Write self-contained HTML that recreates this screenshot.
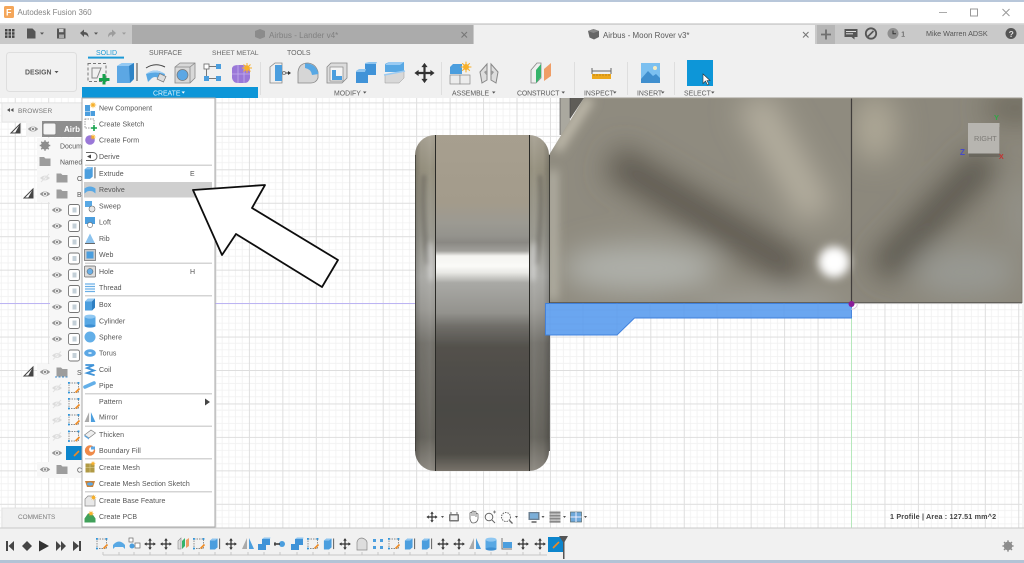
<!DOCTYPE html>
<html><head><meta charset="utf-8"><title>Autodesk Fusion 360</title>
<style>
html,body{margin:0;padding:0;background:#fff;width:1024px;height:563px;overflow:hidden}
svg{display:block;position:absolute;left:0;top:0}
text{font-family:"Liberation Sans",sans-serif;font-size:8px;fill:#666}
.m text{font-size:7px;fill:#555;letter-spacing:.08px}
.l{font-size:6.9px;fill:#5c5c5c;letter-spacing:0}
.t{font-size:6.9px;fill:#555}
</style></head><body>
<svg width="1024" height="563" viewBox="0 0 1024 563" xmlns="http://www.w3.org/2000/svg">
<defs>
<pattern id="g" width="33.45" height="33.45" patternUnits="userSpaceOnUse" patternTransform="translate(14.75 -31.4)">
<rect width="33.45" height="33.45" fill="#fff"/>
<path d="M6.69 0V33.45M13.38 0V33.45M20.07 0V33.45M26.76 0V33.45M0 6.69H33.45M0 13.38H33.45M0 20.07H33.45M0 26.76H33.45" stroke="#f1f1f1" stroke-width=".8"/>
<path d="M.5 0V33.45M0 .5H33.45" stroke="#dedede" stroke-width="1"/>
</pattern>
<filter id="b14" filterUnits="userSpaceOnUse" x="450" y="0" width="680" height="420"><feGaussianBlur stdDeviation="14"/></filter>
<filter id="b5" filterUnits="userSpaceOnUse" x="500" y="50" width="120" height="300"><feGaussianBlur stdDeviation="5"/></filter>
<filter id="b4" filterUnits="userSpaceOnUse" x="780" y="210" width="110" height="110"><feGaussianBlur stdDeviation="4.5"/></filter>
<filter id="b3" x="-80%" y="-30%" width="260%" height="160%"><feGaussianBlur stdDeviation="2.5"/></filter>
<filter id="soft" x="0" y="0" width="100%" height="100%"><feGaussianBlur stdDeviation=".32"/></filter>
<clipPath id="bl"><polygon points="549,155 584,98 851,98 851,303 549,303"/></clipPath>
<clipPath id="br"><rect x="851" y="98" width="171" height="205"/></clipPath>
<clipPath id="tc"><rect x="415" y="135" width="134" height="336" rx="20"/></clipPath>
<linearGradient id="tm" x1="0" y1="135" x2="0" y2="471" gradientUnits="userSpaceOnUse">
<stop offset="0" stop-color="#a79f8f"/><stop offset=".2" stop-color="#a39b8b"/><stop offset=".26" stop-color="#9c9a92"/><stop offset=".3" stop-color="#94938d"/><stop offset=".32" stop-color="#8a8883"/>
<stop offset=".345" stop-color="#a09f9a"/><stop offset=".36" stop-color="#f4f4f0"/><stop offset=".39" stop-color="#fbfbf8"/><stop offset=".41" stop-color="#e8e8e4"/><stop offset=".44" stop-color="#a9a9a5"/>
<stop offset=".53" stop-color="#93928d"/><stop offset=".57" stop-color="#6f6d68"/><stop offset=".63" stop-color="#53514c"/><stop offset=".82" stop-color="#4a4844"/><stop offset=".95" stop-color="#4f4d47"/><stop offset="1" stop-color="#77726a"/>
</linearGradient>
<linearGradient id="ts" x1="0" y1="135" x2="0" y2="471" gradientUnits="userSpaceOnUse">
<stop offset="0" stop-color="#a8a294"/><stop offset=".1" stop-color="#96917f"/><stop offset=".3" stop-color="#9a9990"/><stop offset=".42" stop-color="#aeaeaa"/><stop offset=".52" stop-color="#9c9b96"/><stop offset=".62" stop-color="#75736d"/><stop offset=".9" stop-color="#66645d"/><stop offset="1" stop-color="#8e8a82"/>
</linearGradient>
<linearGradient id="tl" x1="415" y1="0" x2="435" y2="0" gradientUnits="userSpaceOnUse"><stop offset="0" stop-color="#000" stop-opacity=".2"/><stop offset=".3" stop-color="#000" stop-opacity=".02"/><stop offset=".75" stop-color="#fff" stop-opacity=".04"/><stop offset="1" stop-color="#000" stop-opacity=".02"/></linearGradient>
<linearGradient id="tr" x1="549" y1="0" x2="529" y2="0" gradientUnits="userSpaceOnUse"><stop offset="0" stop-color="#000" stop-opacity=".18"/><stop offset=".3" stop-color="#000" stop-opacity=".02"/><stop offset=".75" stop-color="#fff" stop-opacity=".04"/><stop offset="1" stop-color="#000" stop-opacity=".02"/></linearGradient>

<g id="move" fill="#333"><path d="M0-6.5L2-3.8H.7V-.7H3.8V-2L6.5 0 3.8 2V.7H.7V3.8H2L0 6.5-2 3.8H-.7V.7H-3.8V2L-6.5 0-3.8-2V-.7H-.7V-3.8H-2Z"/></g>
<g id="bx"><path d="M-5-3L-2-6H5V3L2 6H-5Z" fill="#4c9ede"/><path d="M-5-3L-2-6H5L2-3Z" fill="#93c8f2"/><path d="M2-3L5-6V3L2 6Z" fill="#2d7fc2"/></g>
<g id="ex"><path d="M-6-4L-3-6.5H3V4L0 6.5H-6Z" fill="#4c9ede"/><path d="M-6-4L-3-6.5H3L0-4Z" fill="#8fc5ef"/><path d="M5.5-6.5V6" stroke="#444"/></g>
<g id="mir"><path d="M-6 5L-1-6V5Z" fill="#aaa"/><path d="M6 5L1-6V5Z" fill="#4c9ede"/></g>
<g id="cmb"><path d="M-6 0H-2V-5H6V1H2V6H-6Z" fill="#3f93d8"/><path d="M-2-5L0-6.5H6.5L6-5Z" fill="#8fc5ef"/></g>
<g id="cyl"><rect x="-5.5" y="-5" width="11" height="10.5" rx="1" fill="#59a8e4"/><ellipse cy="-4.4" rx="5.5" ry="2" fill="#90c8f2"/><ellipse cy="5" rx="5.5" ry="1.6" fill="#3d8fd2"/></g>
<g id="eye"><path d="M-5.2 0Q0-5 5.2 0 0 5-5.2 0Z" fill="#959595"/><circle r="2.2" fill="#efefef"/><circle r="1.2" fill="#8a8a8a"/></g>
<g id="eyeo" opacity=".35"><path d="M-5 0Q0-4.8 5 0 0 4.8-5 0Z" fill="#aaa"/><circle r="1.6" fill="#eee"/><path d="M-4 4L4-4" stroke="#bbb"/></g>
<g id="cp"><rect x="-5.5" y="-5.5" width="11" height="11" rx="2" fill="#fff" stroke="#777" stroke-width=".9"/><rect x="-1.5" y="-2.5" width="4" height="5" fill="#c4d0d8"/></g>
<g id="fd"><path d="M-5.5-4.5H-1L.5-3H5.5V4.5H-5.5Z" fill="#9d9d9d"/></g>
<g id="tr"><path d="M-3-5L3 0-3 5Z" fill="#fff" stroke="#555" stroke-width="1"/></g>
<g id="td"><path d="M4-5V4H-5Z" fill="#fff" stroke="#444" stroke-width="1"/><path d="M4-5V4H-1Z" fill="#444"/></g>
<g id="sks"><rect x="-5" y="-5" width="9.5" height="9.5" fill="none" stroke="#666" stroke-width=".7" stroke-dasharray="1.5 1"/><rect x="-6" y="-6" width="1.8" height="1.8" fill="#2f95dc"/><rect x="3.6" y="-6" width="1.8" height="1.8" fill="#2f95dc"/><rect x="-6" y="3.6" width="1.8" height="1.8" fill="#2f95dc"/><path d="M1.5 4.5L5.5 .5" stroke="#ef8a22" stroke-width="1.6"/></g>
<g id="spark"><circle r="2.2" fill="#f7b02b"/><path d="M0-4V4M-4 0H4M-2.8-2.8L2.8 2.8M-2.8 2.8L2.8-2.8" stroke="#f7b02b" stroke-width=".8"/></g>
<g id="gear"><circle r="3.6" fill="none" stroke="#8c8c8c" stroke-width="2.2"/><path d="M0-6.2V6.2M-6.2 0H6.2M-4.4-4.4L4.4 4.4M-4.4 4.4L4.4-4.4" stroke="#8c8c8c" stroke-width="1.7"/></g>
</defs>

<g filter="url(#soft)">
<!-- frame -->
<rect width="1024" height="563" fill="#fff"/>
<rect width="1024" height="2" fill="#b8c7da"/>
<!-- title -->
<rect x="4" y="6" width="10" height="12" rx="1.5" fill="#f4a65a"/><text x="6" y="15.5" style="font-size:9px;font-weight:bold;fill:#fff">F</text>
<text x="17.5" y="15" style="font-size:7.9px;fill:#858585">Autodesk Fusion 360</text>
<path d="M939 12.5H947" stroke="#aaa"/><rect x="970.5" y="9" width="7" height="7" fill="none" stroke="#999"/><path d="M1002.5 9L1009.5 16M1009.5 9L1002.5 16" stroke="#999"/>

<!-- tab bar -->
<rect y="23" width="1024" height="21" fill="#c9c9c9"/>
<rect y="23" width="1024" height="1.5" fill="#dcdcdc"/>
<rect x="132" y="25" width="341" height="19" fill="#ababab"/>
<rect x="474" y="25" width="341" height="19" fill="#f0f0f0"/>
<rect x="817" y="25" width="18" height="19" fill="#b6b6b6"/>
<path d="M826 29.5V39.5M821 34.5H831" stroke="#6f6f6f" stroke-width="1.8"/>
<!-- left qat -->
<g fill="#444"><rect x="5" y="29" width="2.5" height="2.5"/><rect x="8.5" y="29" width="2.5" height="2.5"/><rect x="12" y="29" width="2.5" height="2.5"/><rect x="5" y="32.2" width="2.5" height="2.5"/><rect x="8.5" y="32.2" width="2.5" height="2.5"/><rect x="12" y="32.2" width="2.5" height="2.5"/><rect x="5" y="35.4" width="2.5" height="2.5"/><rect x="8.5" y="35.4" width="2.5" height="2.5"/><rect x="12" y="35.4" width="2.5" height="2.5"/></g>
<path d="M27 28.5H32.5L35.5 31.5V38.5H27Z" fill="#555"/><path d="M40 32.5H44L42 34.8Z" fill="#555"/>
<path d="M57 28.5H65.5V38.5H57Z" fill="#555"/><rect x="59" y="29" width="4.5" height="3.2" fill="#ccc"/><rect x="59" y="34.5" width="5" height="3.5" fill="#aaa"/>
<path d="M80 33L84 29.5V32C87.5 32 88.5 34 88.5 37.5 87.5 35.5 86 34.5 84 34.7V37Z" fill="#555"/><path d="M94 32.5H98L96 34.8Z" fill="#555"/>
<path d="M116 33L112 29.5V32C109 32 108 34 108 37.5 109 35.5 110.5 34.5 112 34.7V37Z" fill="#9c9c9c"/><path d="M122 32.5H126L124 34.8Z" fill="#9c9c9c"/>
<!-- tabs content -->
<path d="M255 31L260 29 265 31V37L260 39 255 37Z" fill="#8b8b8b"/>
<text x="269" y="38" style="font-size:8.1px;fill:#808080">Airbus - Lander v4*</text>
<path d="M461.5 32L467 37.5M467 32L461.5 37.5" stroke="#777" stroke-width="1.1"/>
<path d="M588 31L593.5 29 599 31V37L594 39.5 589.5 37.5Z" fill="#666"/><path d="M588 31L593.5 33 599 31 593.5 29Z" fill="#888"/>
<text x="603" y="38" style="font-size:7.95px;fill:#5a5a5a">Airbus - Moon Rover v3*</text>
<path d="M803 32L808.5 37.5M808.5 32L803 37.5" stroke="#777" stroke-width="1.1"/>
<!-- right top -->
<path d="M844.5 29H857.5V37H854.5V39.5L851.5 37H844.5Z" fill="#555"/><rect x="846" y="31" width="10" height="1" fill="#ddd"/><rect x="846" y="33.3" width="7" height="1" fill="#ddd"/>
<circle cx="871" cy="33.5" r="5.2" fill="none" stroke="#555" stroke-width="1.8"/><path d="M868 36.5L873.5 31" stroke="#555" stroke-width="1.6"/>
<circle cx="893" cy="33.5" r="5.5" fill="#8f8f8f"/><path d="M893 30.5V33.8H896" stroke="#333" fill="none" stroke-width="1"/>
<text x="901" y="36.5" style="font-size:7.5px;fill:#444">1</text>
<text x="926" y="36" style="font-size:7.2px;fill:#555">Mike Warren ADSK</text>
<circle cx="1011" cy="33.5" r="5.5" fill="#555"/><text x="1008.6" y="36.8" style="font-size:8.5px;font-weight:bold;fill:#ddd">?</text>

<!-- toolbar -->
<rect y="44" width="1024" height="54" fill="#f0f0f0"/>
<rect x="6.5" y="52.5" width="70" height="39" rx="3" fill="#f1f1f1" stroke="#dedede"/>
<text x="25" y="74.5" style="font-size:6.9px;font-weight:bold;fill:#5a5a5a">DESIGN</text><path d="M54.5 71H58.5L56.5 73.3Z" fill="#555"/>
<text x="96" y="55" style="font-size:7px;fill:#1e9ad6">SOLID</text><rect x="88" y="56.6" width="36" height="2" fill="#1e9ad6"/>
<text x="149" y="55" style="font-size:7px;fill:#666">SURFACE</text>
<text x="212" y="55" style="font-size:6.8px;fill:#666">SHEET METAL</text>
<text x="287" y="55" style="font-size:7px;fill:#666">TOOLS</text>
<rect x="82" y="87" width="176" height="11.5" fill="#0b96d8"/>
<text x="153" y="95.5" class="l" style="fill:#dff1fb">CREATE</text><path d="M181.5 91.5H185L183.3 93.6Z" fill="#fff"/>
<g stroke="#dedede"><path d="M260.5 62V95M441.5 62V95M574.5 62V95M627.5 62V95M674.5 62V95"/></g>
<text x="334" y="95.5" class="l">MODIFY</text><path d="M363 91.5H366.500L364.700 93.6Z" fill="#555"/>
<text x="452" y="95.5" class="l">ASSEMBLE</text><path d="M492 91.5H495.500L493.700 93.6Z" fill="#555"/>
<text x="517" y="95.5" class="l" style="letter-spacing:-.1px">CONSTRUCT</text><path d="M561.500 91.5H565L563.200 93.6Z" fill="#555"/>
<text x="584" y="95.5" class="l">INSPECT</text><path d="M613 91.5H616.5L614.8 93.6Z" fill="#555"/>
<text x="637" y="95.5" class="l">INSERT</text><path d="M661 91.5H664.5L662.8 93.6Z" fill="#555"/>
<text x="684" y="95.5" class="l">SELECT</text><path d="M711 91.5H714.5L712.8 93.6Z" fill="#555"/>

<!-- toolbar icons -->
<g>
<rect x="88" y="63.500" width="18" height="18" fill="none" stroke="#777" stroke-dasharray="3 2"/>
<path d="M92 68H101L97 78H92Z" fill="none" stroke="#888"/>
<path d="M104 74V84.500M99 79.500H109.500" stroke="#12a14b" stroke-width="3"/>
<path d="M117 66L122 63H134V79L130 83H117Z" fill="#5ba7e4"/><path d="M117 66L122 63H134L129 66Z" fill="#93c9f3"/><path d="M129 66L134 63V79L130 83Z" fill="#2f83c6"/>
<path d="M137 63V81" stroke="#444"/>
<path d="M146 68Q155 62 165 67" stroke="#444" fill="none"/>
<path d="M146 74Q155 67 165 74L163 81 158 78Q155 76 152 78L148 82Z" fill="#59a8e4"/><path d="M146 74Q155 67 165 74 155 71 146 74Z" fill="#a6d2f5"/><rect x="158" y="75" width="7" height="6" fill="#ddd" stroke="#777" stroke-width=".7" transform="rotate(25 162 78)"/>
<path d="M175 67L180 63H195V78L190 83H175Z" fill="#d8d8d8" stroke="#888" stroke-width=".8"/><path d="M175 67H190V83M190 67L195 63" fill="none" stroke="#888" stroke-width=".8"/><circle cx="182.500" cy="75" r="5.5" fill="#5ba7e4" stroke="#777" stroke-width=".7"/>
<rect x="204" y="64" width="5" height="5" fill="#fff" stroke="#666" stroke-width=".8"/><rect x="216" y="64" width="5" height="5" fill="#4c9ede"/><rect x="204" y="76" width="5" height="5" fill="#4c9ede"/><rect x="216" y="76" width="5" height="5" fill="#4c9ede"/><path d="M209 66.500H216M206.500 69V76M209 78.500H216" stroke="#777" fill="none"/>
<path d="M232 68Q233 65 238 65H244Q249 65 250 70V78Q249 83 244 83H238Q233 83 232 78Z" fill="#9a78d8"/><path d="M238 65V83M244 65V83M232 74H250" stroke="#c3aeec" stroke-width=".8"/><use href="#spark" transform="translate(247 68) scale(1.25)"/>

<path d="M270 67L275 63H282V83H270Z" fill="#efefef" stroke="#888" stroke-width=".8"/><path d="M275 65H282V81H275Z" fill="#4c9ede"/><path d="M283 73H290" stroke="#333"/><path d="M288 71L291 73 288 75Z" fill="#333"/><circle cx="284" cy="73" r="1.6" fill="#ddd" stroke="#555" stroke-width=".6"/>
<path d="M298 83V72Q299 63 308 63 316 64 318 72V78Q316 83 311 83Z" fill="#d6d6d6" stroke="#888" stroke-width=".8"/><path d="M305 63.500Q316 63 318.500 74L312 75Q311 69 305 68Z" fill="#59a8e4"/>
<path d="M327 67L331 63H347V78L342 83H327Z" fill="#dcdcdc" stroke="#888" stroke-width=".8"/><rect x="330" y="67" width="13" height="14" fill="#f4f4f4" stroke="#888" stroke-width=".7"/><path d="M332 70H336V76H342V80H332Z" fill="#4c9ede"/>
<path d="M356 71H365V63H376V75H368V83H356Z" fill="#3f93d8"/><path d="M365 63L369 62H377L376 64H365ZM356 71L359 69H366L365 72H356Z" fill="#8fc5ef"/>
<path d="M385 64L389 62H404V72H385Z" fill="#59a8e4"/><path d="M385 65H400L404 62H389Z" fill="#9acbf3"/><path d="M385 75L404 71V78L399 83H385Z" fill="#d8d8d8" stroke="#999" stroke-width=".5"/><path d="M384 75L405 71" stroke="#9acbf3" stroke-width="1.6"/>
<use href="#move" transform="translate(424.500 73) scale(1.55)"/>

<path d="M450 67L453 64H462V74H450Z" fill="#4c9ede"/><rect x="450" y="75" width="10" height="9" fill="#ececec" stroke="#888" stroke-width=".7"/><rect x="460" y="75" width="10" height="9" fill="#ececec" stroke="#888" stroke-width=".7"/><use href="#spark" transform="translate(466 67) scale(1.35)"/>
<path d="M480 72L487 64V80L482 83Z" fill="#ddd" stroke="#888"/><path d="M498 72L491 64V80L496 83Z" fill="#ddd" stroke="#888"/><path d="M484 72L487 70V76ZM494 72L491 70V76Z" fill="#999"/>

<path d="M531 70L537 63H541V78L536 83H531Z" fill="#efefef" stroke="#888" stroke-width=".8"/><path d="M536 70L541 64V77L536 83Z" fill="#35b36a"/><path d="M544 69L551 63V76L544 81Z" fill="#ef9d66"/>
<rect x="592" y="74" width="19" height="5" fill="#eda81f"/><path d="M592 71H611M592 68V74M611 68V74" stroke="#666" fill="none"/><path d="M594 74V76M597 74V76M600 74V76M603 74V76M606 74V76M609 74V76" stroke="#a06c10" stroke-width=".6"/>
<rect x="641" y="63" width="19" height="20" fill="#7cc0f0"/><circle cx="655" cy="68" r="2" fill="#f7ecc0"/><path d="M641 79L648 71 653 76 656 74 660 78V83H641Z" fill="#3f8fce"/>
<rect x="687" y="60" width="26" height="26" fill="#0b96d8"/><path d="M703 74V83.500L705.500 81 707.500 85 709 84.300 707 80.500H710Z" fill="#fff" stroke="#333" stroke-width=".6"/>
</g>

<!-- canvas -->
<rect y="98" width="1024" height="430" fill="url(#g)"/>
<path d="M0 303.500H416" stroke="#bcb4f3"/>
<path d="M851.500 318V528" stroke="#b6e8bc"/>
<rect x="1022" y="98" width="2" height="430" fill="#f4f4f4"/>

<!-- block behind -->
<rect x="560" y="98" width="10" height="37" fill="#aaa89f"/><polygon points="570,98 584,98 570,119" fill="#5f5d58"/>
<path d="M560 98V135M570 98V118" stroke="#444" stroke-width=".6"/>

<!-- body left panel -->
<g clip-path="url(#bl)">
<rect x="540" y="90" width="320" height="220" fill="#8f8b7f"/>
<g filter="url(#b14)">
<path d="M612 160L800 272" stroke="#5d594f" stroke-width="34" fill="none"/>
<path d="M752 100L818 215" stroke="#b4ae9f" stroke-width="36" fill="none"/>
<ellipse cx="640" cy="268" rx="78" ry="24" fill="#afb0aa"/>
<ellipse cx="770" cy="306" rx="75" ry="10" fill="#a9a8a2"/>
</g>
<g filter="url(#b5)">
<path d="M553 170V300" stroke="#bab7aa" stroke-width="8" fill="none"/>
<path d="M556 150L590 98" stroke="#c2bdae" stroke-width="10" fill="none"/>
</g>
</g>
<!-- body right panel -->
<g clip-path="url(#br)">
<rect x="845" y="90" width="185" height="220" fill="#8c887c"/>
<g filter="url(#b14)">
<ellipse cx="875" cy="128" rx="22" ry="34" fill="#ada796"/>
<path d="M988 158L880 272" stroke="#5a564e" stroke-width="30" fill="none"/>
<ellipse cx="1015" cy="108" rx="32" ry="14" fill="#6a665a"/>
<ellipse cx="965" cy="272" rx="52" ry="24" fill="#989993"/>
<ellipse cx="1022" cy="215" rx="10" ry="36" fill="#979790"/>
</g>
</g>
<g filter="url(#b4)">
<circle cx="834" cy="262" r="15.500" fill="#fff"/>
</g>
<path d="M851.500 98V303" stroke="#403e3a" stroke-width="1.2"/>
<path d="M549 302.700H1022" stroke="#5c5a55" stroke-width="1.2"/>
<path d="M549.500 155V303" stroke="#3e3c38"/>
<path d="M1022 98V303" stroke="#77746a" stroke-width=".8"/>
<path d="M584 98H1022" stroke="#a09c92" stroke-width="1"/>

<!-- tire -->
<g clip-path="url(#tc)">
<rect x="415" y="135" width="134" height="336" fill="url(#ts)"/>
<rect x="435" y="135" width="94" height="336" fill="url(#tm)"/>
<rect x="415" y="135" width="20" height="336" fill="url(#tl)"/>
<rect x="529" y="135" width="20" height="336" fill="url(#tr)"/>
<g filter="url(#b3)">
<path d="M424 175Q421 215 428 265" stroke="#55524c" stroke-width="4" fill="none" opacity=".55"/>
<path d="M540 175Q543 215 536 265" stroke="#55524c" stroke-width="4" fill="none" opacity=".55"/>
<ellipse cx="431" cy="262" rx="3" ry="20" fill="#eee" opacity=".5"/><ellipse cx="533" cy="262" rx="3" ry="20" fill="#eee" opacity=".5"/>
</g>
</g>
<path d="M435.500 135V471M529.500 135V471" stroke="#2b2a28" stroke-width="1"/>
<path d="M415.500 155V451M549.500 155V451" stroke="#3f3d38" stroke-width=".8"/>

<!-- sketch profile -->
<polygon points="545.500,303.500 851.500,303.500 851.500,318 634.500,318 617,335 545.500,335" fill="#6ba6f0" stroke="#4181dc" stroke-width=".9"/>
<path d="M550 303V335M583 303V335M617 303V335M650 303V318M684 303V318M717 303V318M751 303V318M784 303V318M818 303V318M546 310H851M546 317H851M546 324H622M546 330H617" stroke="#5d99e4" stroke-width=".4" opacity=".6" fill="none"/>
<circle cx="851.500" cy="304" r="3" fill="#8a1f98"/><path d="M851 309A5 5 0 0 0 857 303" stroke="#d8c4da" fill="none"/>

<!-- viewcube -->
<rect x="969" y="127" width="31" height="30" fill="#5f5b53" opacity=".55"/>
<rect x="968" y="123" width="31.500" height="30.500" fill="#b7b5b0"/>
<text x="974" y="141" style="font-size:7.300px;fill:#7c7a76">RIGHT</text>
<text x="994" y="120" style="font-size:7.500px;font-weight:bold;fill:#2fa844">Y</text>
<text x="960" y="155" style="font-size:8px;font-weight:bold;fill:#4448c8">Z</text>
<text x="999" y="159" style="font-size:7px;font-weight:bold;fill:#c42f2f">X</text>

<!-- browser -->
<rect x="2" y="103" width="80" height="19" fill="#f3f3f3" stroke="#e2e2e2" stroke-width=".7"/>
<path d="M7 110L10 108V112ZM10.500 110L13.500 108V112Z" fill="#555"/>
<text x="18" y="113" class="t" style="font-size:6.5px;fill:#777;letter-spacing:.1px">BROWSER</text>
<g>
<rect x="26" y="121" width="56" height="16" fill="#f1f1f1"/>
<rect x="42" y="121" width="40" height="16" fill="#8e8e8e"/>
<rect x="43" y="123" width="13" height="12" rx="2" fill="#f5f5f5" stroke="#888"/>
<use href="#td" transform="translate(16 129)"/><use href="#eye" transform="translate(33 129)"/>
<text x="64" y="132" style="font-size:8px;font-weight:bold;fill:#fff">Airb</text>
<rect x="37" y="138" width="45" height="16" fill="#f7f7f7"/><use href="#tr" transform="translate(28 145.500)"/><use href="#gear" transform="translate(45 145.500) scale(.85)"/><text x="60" y="148.500" class="t">Docum</text>
<rect x="37" y="154" width="45" height="16" fill="#f7f7f7"/><use href="#tr" transform="translate(28 161.500)"/><use href="#fd" transform="translate(45 161.500)"/><text x="60" y="164.500" class="t">Named</text>
<rect x="37" y="170" width="45" height="16" fill="#f7f7f7"/><use href="#tr" transform="translate(28 178)"/><use href="#eyeo" transform="translate(45 178)"/><use href="#fd" transform="translate(62 178)"/><text x="77" y="181" class="t">O</text>
<rect x="37" y="186" width="45" height="16" fill="#f7f7f7"/><use href="#td" transform="translate(29 194)"/><use href="#eye" transform="translate(45 194)"/><use href="#fd" transform="translate(62 194)"/><text x="77" y="197" class="t">B</text>

<rect x="50" y="202" width="32" height="162" fill="#f7f7f7"/>
<use href="#eye" transform="translate(57 210)"/><use href="#cp" transform="translate(74 210)"/>
<use href="#eye" transform="translate(57 226)"/><use href="#cp" transform="translate(74 226)"/>
<use href="#eye" transform="translate(57 242)"/><use href="#cp" transform="translate(74 242)"/>
<use href="#eye" transform="translate(57 258.500)"/><use href="#cp" transform="translate(74 258.500)"/>
<use href="#eye" transform="translate(57 275)"/><use href="#cp" transform="translate(74 275)"/>
<use href="#eye" transform="translate(57 291)"/><use href="#cp" transform="translate(74 291)"/>
<use href="#eye" transform="translate(57 307)"/><use href="#cp" transform="translate(74 307)"/>
<use href="#eye" transform="translate(57 323)"/><use href="#cp" transform="translate(74 323)"/>
<use href="#eye" transform="translate(57 339)"/><use href="#cp" transform="translate(74 339)"/>
<use href="#eyeo" transform="translate(57 355.500)"/><use href="#cp" transform="translate(74 355.500)"/>

<rect x="37" y="364" width="45" height="16" fill="#f7f7f7"/><use href="#td" transform="translate(29 372)"/><use href="#eye" transform="translate(45 372)"/><use href="#fd" transform="translate(62 372)"/><path d="M55 377H68" stroke="#3f8fd0" stroke-dasharray="2 1.5"/><text x="77" y="375" class="t">S</text>
<rect x="50" y="380" width="32" height="82" fill="#f7f7f7"/>
<use href="#eyeo" transform="translate(57 388)"/><use href="#sks" transform="translate(74 388)"/>
<use href="#eyeo" transform="translate(57 404)"/><use href="#sks" transform="translate(74 404)"/>
<use href="#eyeo" transform="translate(57 420)"/><use href="#sks" transform="translate(74 420)"/>
<use href="#eyeo" transform="translate(57 436.500)"/><use href="#sks" transform="translate(74 436.500)"/>
<use href="#eye" transform="translate(57 453)"/><rect x="66" y="446" width="16" height="14" fill="#0b85cc"/><path d="M74 456L79 451" stroke="#ef8a22" stroke-width="1.6"/>
<rect x="37" y="462" width="45" height="16" fill="#f7f7f7"/><use href="#tr" transform="translate(28 469.500)"/><use href="#eye" transform="translate(45 469.500)"/><use href="#fd" transform="translate(62 469.500)"/><text x="77" y="472.500" class="t">C</text>
</g>
<rect x="2" y="508" width="80" height="20" fill="#f0f0f0" stroke="#dedede" stroke-width=".7"/>
<text x="18" y="519" class="t" style="font-size:6.4px;fill:#7a7a7a">COMMENTS</text>

<!-- menu -->
<rect x="82" y="98" width="133" height="429" fill="#fff" stroke="#a8a8a8" stroke-width="1"/>
<rect x="84" y="182" width="128" height="15.500" fill="#cfcfcf"/>
<g fill="#d4d4d4">
<rect x="85" y="164.500" width="127" height="1.500"/><rect x="85" y="262.500" width="127" height="1.500"/><rect x="85" y="295" width="127" height="1.500"/><rect x="85" y="393" width="127" height="1.500"/><rect x="85" y="425.500" width="127" height="1.500"/><rect x="85" y="458" width="127" height="1.500"/><rect x="85" y="491" width="127" height="1.500"/>
</g>
<g class="m">
<text x="99" y="110.500">New Component</text>
<text x="99" y="126.500">Create Sketch</text>
<text x="99" y="142.500">Create Form</text>
<text x="99" y="159">Derive</text>
<text x="99" y="176">Extrude</text><text x="190" y="176">E</text>
<text x="99" y="192">Revolve</text>
<text x="99" y="208.500">Sweep</text>
<text x="99" y="224.500">Loft</text>
<text x="99" y="241">Rib</text>
<text x="99" y="257">Web</text>
<text x="99" y="274">Hole</text><text x="190" y="274">H</text>
<text x="99" y="290">Thread</text>
<text x="99" y="307">Box</text>
<text x="99" y="323.500">Cylinder</text>
<text x="99" y="339.500">Sphere</text>
<text x="99" y="355.500">Torus</text>
<text x="99" y="372">Coil</text>
<text x="99" y="388">Pipe</text>
<text x="99" y="404">Pattern</text>
<text x="99" y="419.500">Mirror</text>
<text x="99" y="437">Thicken</text>
<text x="99" y="453">Boundary Fill</text>
<text x="99" y="470">Create Mesh</text>
<text x="99" y="486">Create Mesh Section Sketch</text>
<text x="99" y="503">Create Base Feature</text>
<text x="99" y="519">Create PCB</text>
</g>
<path d="M205 398.500L210 402 205 405.500Z" fill="#444"/>
<!-- menu icons -->
<path d="M85 105H90V111H85ZM90.500 111H95V116H90.500ZM85 111.500H90V116H85Z" fill="#4c9ede"/><use href="#spark" transform="translate(93 105) scale(.8)"/>
<g transform="translate(90 124)"><rect x="-5" y="-5" width="9" height="9" fill="none" stroke="#777" stroke-width=".7" stroke-dasharray="1.500 1"/><path d="M4 1V7M1 4H7" stroke="#12a14b" stroke-width="1.600"/></g>
<g transform="translate(90 140)"><circle r="4.800" fill="#9a78d8"/><use href="#spark" transform="translate(3 -3) scale(.7)"/></g>
<g transform="translate(90 156.500)"><path d="M-4-4H3A4 4 0 0 1 3 4H-4" fill="none" stroke="#666"/><path d="M-3 0L1-2V2Z" fill="#444"/></g>
<use href="#ex" transform="translate(90 173) scale(.9)"/>
<g transform="translate(90 189.500)"><path d="M-5.500-1Q0-5 5.500-1V4L3 2Q0 1-3 2L-5.500 4Z" fill="#59a8e4"/></g>
<g transform="translate(90 206)"><path d="M-5-5H2V1H-5Z" fill="#59a8e4"/><circle cx="2" cy="3" r="3" fill="#e6e6e6" stroke="#666" stroke-width=".6"/></g>
<g transform="translate(90 222)"><path d="M-5-5H5V2H-5Z" fill="#4c9ede"/><circle cy="3" r="2.600" fill="#fff" stroke="#666" stroke-width=".6"/></g>
<g transform="translate(90 238.500)"><path d="M-5 5L0-5 5 5Z" fill="#8cc3ee"/><path d="M-5 5H5" stroke="#666"/></g>
<g transform="translate(90 255)"><rect x="-5.500" y="-5.500" width="11" height="11" fill="#ccc" stroke="#666" stroke-width=".7"/><rect x="-3.500" y="-3.500" width="7" height="7" fill="#4c9ede"/></g>
<g transform="translate(90 271.500)"><rect x="-5.500" y="-5.500" width="11" height="11" rx="1" fill="#ddd" stroke="#666" stroke-width=".7"/><circle r="3" fill="#6aafe6" stroke="#555" stroke-width=".5"/></g>
<g transform="translate(90 288)" stroke="#6aafe6" stroke-width="1.200"><path d="M-5-4H5M-5-1.500H5M-5 1H5M-5 3.500H5"/></g>
<use href="#bx" transform="translate(90 304.500)"/>
<use href="#cyl" transform="translate(90 321)"/>
<circle cx="90" cy="337" r="5.500" fill="#64afe8"/>
<g transform="translate(90 353)"><ellipse rx="5.800" ry="3.800" fill="#5ba7e4"/><ellipse rx="1.800" ry="1" fill="#d4ecfc"/></g>
<path d="M86 365H94L87 368 94 370.500 87 373 94 375" fill="none" stroke="#3f93d8" stroke-width="1.800" stroke-linecap="round"/>
<path d="M85 387L94 383" stroke="#64afe8" stroke-width="3.600" stroke-linecap="round"/>
<use href="#mir" transform="translate(90 417.500) scale(.9)"/>
<g transform="translate(90 434)"><path d="M-5.500 1L1-4 5.500-1-1 4Z" fill="#eee" stroke="#777" stroke-width=".6"/><path d="M-5.500 1L-1 4V5.500L-5.500 2.500Z" fill="#5ba7e4"/></g>
<g transform="translate(90 450.500)"><circle r="5.200" fill="#ef8a4a"/><circle cx="1.500" cy="-1" r="2.400" fill="#fff"/><rect x="1" y="-4" width="4" height="3" fill="#5ba7e4"/></g>
<g transform="translate(90 467.500)"><path d="M-4.500-4H4.500V5H-4.500Z" fill="#b09a45"/><path d="M-4.500 0H4.500M0-4V5" stroke="#dfd49c" stroke-width=".5"/><use href="#spark" transform="translate(3 -4) scale(.6)"/></g>
<g transform="translate(90 484)"><path d="M-5-3H5L3 3H-3Z" fill="#c8843d"/><ellipse rx="3" ry="1.600" fill="#5ba7e4"/></g>
<g transform="translate(90 501)"><path d="M-5 5V-2L-2-5H4L5-2V5Z" fill="#e8e8e8" stroke="#888" stroke-width=".7"/><use href="#spark" transform="translate(3.500 -3.500) scale(.7)"/></g>
<g transform="translate(90 517.500)"><path d="M-5.500 5V1L-2-4H2L5.500 1V5Z" fill="#3fa05a"/><use href="#spark" transform="translate(1 -4) scale(.7)"/></g>

<!-- arrow -->
<polygon points="193,190 265,185 252,208 338,260 322,287 236,234 222,255" fill="#fff" stroke="#111" stroke-width="1.800" stroke-linejoin="round"/>

<!-- nav bar -->
<use href="#move" transform="translate(432 517) scale(.85)"/><path d="M441 516H444L442.500 518Z" fill="#555"/>
<g transform="translate(454 517)"><rect x="-5" y="-3" width="10" height="7.500" rx="1" fill="#777"/><rect x="-3.500" y="-1.500" width="7" height="4.500" fill="#f0f0f0"/><path d="M-3-5V-3M3-5V-3" stroke="#777"/></g>
<path d="M470 519V513Q471 512 472 513V516 511.500Q473 510.500 474 511.500V516 512Q475 511 476 512V517 514Q477 513 478 514V519Q477 523 473 523 471 523 470 519Z" fill="#fff" stroke="#666" stroke-width=".8"/>
<g transform="translate(489 517)" fill="none" stroke="#666"><circle r="3.800"/><path d="M3 3L6 6"/><path d="M4 -5H7M5.500-6.500V-3.500" stroke-width=".7"/></g>
<g transform="translate(506 517)" fill="none" stroke="#666"><circle r="4.500" stroke-dasharray="1.500 1"/><path d="M3.500 3.500L6.500 6.500" stroke-width="1.300"/></g><path d="M515 516H518L516.500 518Z" fill="#555"/>
<g transform="translate(534 517)"><rect x="-5.500" y="-5" width="11" height="8" fill="#6a7f92"/><rect x="-4" y="-3.800" width="8" height="5.500" fill="#7aaed8"/><path d="M-2.500 5H2.500" stroke="#555" stroke-width="1.400"/></g><path d="M541.500 516H544.500L543 518Z" fill="#555"/>
<g transform="translate(555 517)" fill="#888"><rect x="-5.500" y="-5.500" width="11" height="2.200"/><rect x="-5.500" y="-2.500" width="11" height="2.200"/><rect x="-5.500" y=".5" width="11" height="2.200"/><rect x="-5.500" y="3.500" width="11" height="2.200"/></g><path d="M563 516H566L564.500 518Z" fill="#555"/>
<g transform="translate(576 517)"><rect x="-5.500" y="-5" width="11" height="10" fill="#6ea8da" stroke="#566" stroke-width=".7"/><path d="M0-5V5M-5.500 0H5.500" stroke="#eef"/></g><path d="M584 516H587L585.500 518Z" fill="#555"/>
<text x="890" y="519" style="font-size:7.200px;font-weight:bold;fill:#444;letter-spacing:.16px">1 Profile | Area : 127.51 mm^2</text>

<!-- timeline -->
<rect y="528" width="1024" height="32" fill="#f1f1f1"/>
<rect y="527.500" width="1024" height="1" fill="#c9c9c9"/>
<rect y="560" width="1024" height="3" fill="#b2c3d6"/>
<g fill="#444">
<path d="M6 541H8V551H6ZM14 541V551L8.500 546Z"/>
<path d="M22 546L27 541V551ZM27 541L32 546 27 551Z"/>
<path d="M39 540.500L49 546 39 551.500Z" fill="#333"/>
<path d="M56 541L61 546 56 551ZM61 541L66 546 61 551Z"/>
<path d="M73 541L79 546 73 551ZM79 541H81V551H79Z"/>
</g>
<path d="M103 555H547M103 555V552M119 555V552M134 555V552M150 555V552M166 555V552M183 555V552M199 555V552M215 555V552M231 555V552M248 555V552M264 555V552M280 555V552M297 555V552M313 555V552M329 555V552M345 555V552M362 555V552M378 555V552M394 555V552M410 555V552M427 555V552M443 555V552M459 555V552M475 555V552M491 555V552M507 555V552M523 555V552M540 555V552" stroke="#c6c6c6" fill="none"/>
<use href="#sks" transform="translate(102 544)"/>
<path d="M113 545Q119 538 125 545V549L123 547H115L113 549Z" fill="#59a8e4"/>
<g transform="translate(134 544)"><rect x="-5" y="-6" width="4" height="4" fill="#fff" stroke="#666" stroke-width=".7"/><rect x="1" y="-1" width="5" height="5" fill="#fff" stroke="#666" stroke-width=".7"/><circle cx="-2" cy="2" r="2.500" fill="#4c9ede"/></g>
<use href="#move" transform="translate(150 544) scale(.9)"/>
<use href="#move" transform="translate(166 544) scale(.9)"/>
<g transform="translate(183 544)"><path d="M-5 5V-3L-2-6V5Z" fill="#ddd" stroke="#888" stroke-width=".6"/><path d="M-1 5V-3L2-6V2Z" fill="#35b36a"/><path d="M3 4V-4L6-6V2Z" fill="#ef9d66"/></g>
<use href="#sks" transform="translate(199 544)"/>
<use href="#ex" transform="translate(215 544) scale(.85)"/>
<use href="#move" transform="translate(231 544) scale(.9)"/>
<use href="#mir" transform="translate(248 544)"/>
<use href="#cmb" transform="translate(264 544)"/>
<g transform="translate(280 544)"><circle cx="2" r="3" fill="#4c9ede"/><path d="M-6 0H0" stroke="#333" stroke-width="1.500"/><path d="M-5-2V2" stroke="#333"/></g>
<use href="#cmb" transform="translate(297 544)"/>
<use href="#sks" transform="translate(313 544)"/>
<use href="#ex" transform="translate(329 544) scale(.85)"/>
<use href="#move" transform="translate(345 544) scale(.9)"/>
<path d="M357 550V542Q358 538 362 538 366 539 367 542V550Z" fill="#ddd" stroke="#888" stroke-width=".7"/>
<g transform="translate(378 544)" fill="#4c9ede"><rect x="-5" y="-5" width="3" height="3"/><rect x="2" y="-5" width="3" height="3"/><rect x="-5" y="2" width="3" height="3"/><rect x="2" y="2" width="3" height="3"/></g>
<use href="#sks" transform="translate(394 544)"/>
<use href="#ex" transform="translate(410 544) scale(.85)"/>
<use href="#ex" transform="translate(427 544) scale(.85)"/>
<use href="#move" transform="translate(443 544) scale(.9)"/>
<use href="#move" transform="translate(459 544) scale(.9)"/>
<use href="#mir" transform="translate(475 544)"/>
<use href="#cyl" transform="translate(491 544)"/>
<g transform="translate(507 544)"><path d="M-5-6V5H5" fill="none" stroke="#777"/><rect x="-4" y="-2" width="9" height="6" fill="#4c9ede"/></g>
<use href="#move" transform="translate(523 544) scale(.9)"/>
<use href="#move" transform="translate(540 544) scale(.9)"/>
<rect x="548" y="537" width="15" height="15" fill="#0b85cc"/><path d="M553 548L559 542" stroke="#ef8a22" stroke-width="1.600"/>
<path d="M559 536H568L564.500 542V559H563V542Z" fill="#555"/>
<use href="#gear" transform="translate(1008 546) scale(.9)"/>
</g>
</svg>
</body></html>
